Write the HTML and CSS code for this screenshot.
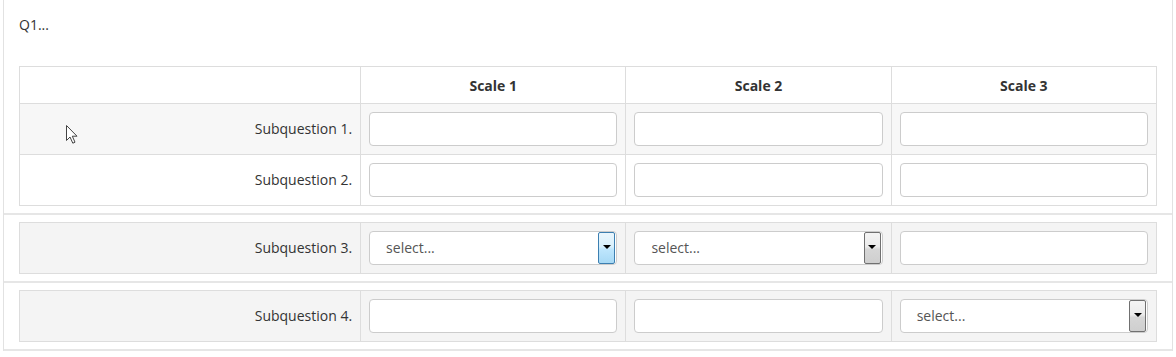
FILE: index.html
```html
<!DOCTYPE html>
<html lang="en">
<head>
  <meta charset="UTF-8">
  <title>Array Question</title>
  <link rel="stylesheet" href="styles.css">
</head>
<body>

  <div class="survey">

    <div class="question">
      <p class="q-text">Q1...</p>
      <table class="grid">
        <colgroup><col class="label-col"><col><col><col></colgroup>
        <thead>
          <tr><th></th><th>Scale 1</th><th>Scale 2</th><th>Scale 3</th></tr>
        </thead>
        <tbody>
          <tr class="shaded">
            <td class="label">Subquestion 1.</td>
            <td><input type="text"></td>
            <td><input type="text"></td>
            <td><input type="text"></td>
          </tr>
          <tr>
            <td class="label">Subquestion 2.</td>
            <td><input type="text"></td>
            <td><input type="text"></td>
            <td><input type="text"></td>
          </tr>
        </tbody>
      </table>
    </div>

    <div class="question">
      <table class="grid">
        <colgroup><col class="label-col"><col><col><col></colgroup>
        <tr class="grey">
          <td class="label">Subquestion 3.</td>
          <td>
            <div class="select">
              <span class="select-text">select...</span>
              <span class="select-btn hover"><i class="caret"></i></span>
            </div>
          </td>
          <td>
            <div class="select">
              <span class="select-text">select...</span>
              <span class="select-btn"><i class="caret"></i></span>
            </div>
          </td>
          <td><input type="text"></td>
        </tr>
      </table>
    </div>

    <div class="question">
      <table class="grid">
        <colgroup><col class="label-col"><col><col><col></colgroup>
        <tr class="grey">
          <td class="label">Subquestion 4.</td>
          <td><input type="text"></td>
          <td><input type="text"></td>
          <td>
            <div class="select">
              <span class="select-text">select...</span>
              <span class="select-btn"><i class="caret"></i></span>
            </div>
          </td>
        </tr>
      </table>
    </div>

  </div>

  <!-- mouse pointer -->
  <svg class="cursor" width="13" height="20" viewBox="0 0 13 20">
    <path d="M0.5 0.5 L0.5 15.5 L4 12 L6.8 18.2 L9 17.2 L6.3 11.2 L11 11.2 Z" fill="#fff" stroke="#444" stroke-width="1" stroke-linejoin="round"/>
  </svg>

</body>
</html>
```

FILE: styles.css
```css
body {
  margin: 0;
  font-family: "Open Sans", Arial, sans-serif;
  font-size: 14px;
  color: #333;
  background: #fff;
}
.survey {
  margin: 0 3px;
  border-left: 1px solid #e2e2e2;
  border-right: 1px solid #e2e2e2;
}
.question {
  padding: 7px 15px;
  border-bottom: 2px solid #e6e6e6;
}
.question:first-child {
  padding-top: 15px;
}
.q-text {
  margin: 0 0 31px;
  line-height: 20px;
}
.grid {
  width: 100%;
  table-layout: fixed;
  border-collapse: collapse;
  border: 1px solid #ddd;
}
.label-col {
  width: 30%;
}
.grid th,
.grid td {
  border: 1px solid #ddd;
  padding: 8px;
  line-height: 20px;
}
.grid th {
  padding-top: 9px;
  padding-bottom: 7px;
  font-weight: bold;
  text-align: center;
  color: #333;
}
.grid td.label {
  text-align: right;
  vertical-align: middle;
  color: #333;
}
.shaded {
  background: #f7f7f7;
}
.grey {
  background: #f4f4f4;
}
input {
  display: block;
  box-sizing: border-box;
  width: 100%;
  height: 34px;
  margin: 0;
  border: 1px solid #ccc;
  border-radius: 4px;
  background: #fff;
  font: inherit;
}
.select {
  display: flex;
  box-sizing: border-box;
  height: 34px;
  border: 1px solid #ccc;
  border-radius: 4px;
  background: #fff;
  padding: 0 1px 0 0;
}
.select-text {
  flex: 1;
  padding-left: 16px;
  line-height: 32px;
  color: #555;
}
.select-btn {
  box-sizing: border-box;
  width: 17px;
  display: flex;
  justify-content: center;
  align-items: center;
  padding-bottom: 2px;
  border: 1px solid #707070;
  border-radius: 2px;
  background: linear-gradient(#f4f4f4, #ebebeb 45%, #d6d6d6 55%, #cfcfcf);
}
.select-btn.hover {
  border-color: #3c7fb1;
  background: linear-gradient(#eaf6fd, #d9f0fc 45%, #bee6fd 55%, #a7d9f5);
}
.caret {
  width: 0;
  height: 0;
  border-left: 4px solid transparent;
  border-right: 4px solid transparent;
  border-top: 4px solid #000;
}
.cursor {
  position: absolute;
  left: 66px;
  top: 125px;
}
```
